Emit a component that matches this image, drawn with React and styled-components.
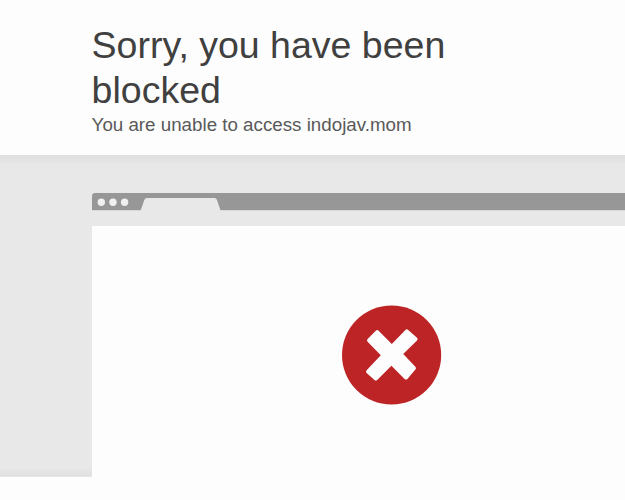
import React from "react";
import styled, { createGlobalStyle } from "styled-components";

const GlobalStyle = createGlobalStyle`
  *, *::before, *::after { box-sizing: border-box; }
  body {
    margin: 0;
    background: #fdfdfd;
    font-family: "Liberation Sans", Arial, sans-serif;
  }
`;

const Page = styled.div`
  display: flex;
  flex-direction: column;
  height: 500px;
  overflow: hidden;
`;

const Header = styled.header`
  flex: none;
  height: 155px;
  padding: 23px 92px 0 91.6px;
`;

const Title = styled.h1`
  margin: 0;
  font-size: 37.5px;
  font-weight: 400;
  line-height: 45px;
  color: #404040;
`;

const Subtitle = styled.h2`
  margin: 0;
  font-size: 18.75px;
  font-weight: 400;
  line-height: 24px;
  color: #595959;
`;

const Highlight = styled.section`
  flex: none;
  height: 322px;
  padding: 38px 0 0 92px;
  background: linear-gradient(
    to bottom,
    #dedede 0,
    #e3e3e3 5px,
    #e8e8e8 10px,
    #e8e8e8 313px,
    #e0e0e0 321px,
    #ececec 322px
  );
`;

const BrowserBar = styled.svg`
  display: block;
  width: 533px;
  height: 18px;
`;

const Screenshot = styled.div`
  display: flex;
  justify-content: center;
  width: 600px;
  height: 274px;
  margin-top: 15px;
  padding-top: 79px;
  background: #fdfdfd;
`;

const ErrorIcon = styled.svg`
  display: block;
  width: 100px;
  height: 100px;
`;

export default function App() {
  return (
    <>
      <GlobalStyle />
      <Page>
        <Header>
          <Title>Sorry, you have been blocked</Title>
          <Subtitle>You are unable to access indojav.mom</Subtitle>
        </Header>
        <Highlight>
          <BrowserBar viewBox="0 0 533 18" aria-hidden="true">
            <path d="M0 17.5h533" stroke="#d8d8d8" />
            <path d="M0 17V3Q0 0 3 0H533V17Z" fill="#979797" />
            <path d="M48.5 18L52.3 7Q53 5 55 5H122.5Q124.3 5 125 7L128.7 18Z" fill="#e8e8e8" />
            <g fill="#f0f0f0">
              <circle cx="9.3" cy="9.3" r="3.7" />
              <circle cx="21" cy="9.3" r="3.7" />
              <circle cx="32.6" cy="9.3" r="3.7" />
            </g>
          </BrowserBar>
          <Screenshot>
            <ErrorIcon viewBox="0 0 100 100" role="img" aria-label="Blocked">
              <circle cx="49.6" cy="50" r="49.6" fill="#bd2426" />
              <path
                d="M33.8 25.7Q35.2 24.4 36.6 25.8L49.8 39L63.4 25.1Q64.7 23.6 66.2 24.9L75 32.7Q76.3 34 75 35.4L61.2 49L73.4 61.8Q74.7 63.2 73.4 64.6L65.4 73.9Q64 75.2 62.6 73.9L49.4 60.8L35.2 74.9Q33.8 76.2 32.5 74.9L24.6 68Q23.3 66.6 24.6 65.2L38.8 50.3L25.6 36.8Q24.3 35.4 25.6 34Z"
                fill="#fdfdfd"
              />
            </ErrorIcon>
          </Screenshot>
        </Highlight>
      </Page>
    </>
  );
}
